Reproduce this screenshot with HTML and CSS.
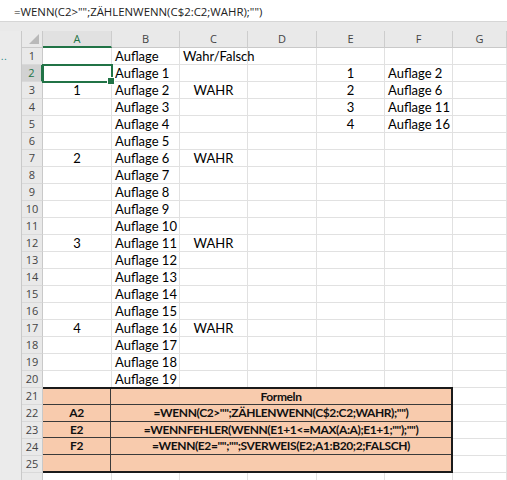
FILE: index.html
```html
<!DOCTYPE html>
<html lang="de">
<head>
<meta charset="utf-8">
<title>Excel</title>
<link rel="stylesheet" href="styles.css">
</head>
<body>
<div class="app">
  <div class="fbar"><span class="ftext">=WENN(C2&gt;"";ZÄHLENWENN(C$2:C2;WAHR);"")</span></div>
  <div class="band"></div>
  <div class="sheetwrap">
    <div class="gutter"><span class="dots">..</span></div>
    <div class="grid">
      <div class="corner"><span class="tri"></span></div>
      <div class="ch sel">A</div><div class="ch">B</div><div class="ch">C</div><div class="ch">D</div><div class="ch">E</div><div class="ch">F</div><div class="ch">G</div>

      <div class="rh">1</div><div class="c"></div><div class="c">Auflage</div><div class="c">Wahr/Falsch</div><div class="c"></div><div class="c"></div><div class="c"></div><div class="c"></div>
      <div class="rh sel">2</div><div class="c active"></div><div class="c">Auflage 1</div><div class="c"></div><div class="c"></div><div class="c ctr">1</div><div class="c">Auflage 2</div><div class="c"></div>
      <div class="rh">3</div><div class="c ctr">1</div><div class="c">Auflage 2</div><div class="c ctr">WAHR</div><div class="c"></div><div class="c ctr">2</div><div class="c">Auflage 6</div><div class="c"></div>
      <div class="rh">4</div><div class="c"></div><div class="c">Auflage 3</div><div class="c"></div><div class="c"></div><div class="c ctr">3</div><div class="c">Auflage 11</div><div class="c"></div>
      <div class="rh">5</div><div class="c"></div><div class="c">Auflage 4</div><div class="c"></div><div class="c"></div><div class="c ctr">4</div><div class="c">Auflage 16</div><div class="c"></div>
      <div class="rh">6</div><div class="c"></div><div class="c">Auflage 5</div><div class="c"></div><div class="c"></div><div class="c"></div><div class="c"></div><div class="c"></div>
      <div class="rh">7</div><div class="c ctr">2</div><div class="c">Auflage 6</div><div class="c ctr">WAHR</div><div class="c"></div><div class="c"></div><div class="c"></div><div class="c"></div>
      <div class="rh">8</div><div class="c"></div><div class="c">Auflage 7</div><div class="c"></div><div class="c"></div><div class="c"></div><div class="c"></div><div class="c"></div>
      <div class="rh">9</div><div class="c"></div><div class="c">Auflage 8</div><div class="c"></div><div class="c"></div><div class="c"></div><div class="c"></div><div class="c"></div>
      <div class="rh">10</div><div class="c"></div><div class="c">Auflage 9</div><div class="c"></div><div class="c"></div><div class="c"></div><div class="c"></div><div class="c"></div>
      <div class="rh">11</div><div class="c"></div><div class="c">Auflage 10</div><div class="c"></div><div class="c"></div><div class="c"></div><div class="c"></div><div class="c"></div>
      <div class="rh">12</div><div class="c ctr">3</div><div class="c">Auflage 11</div><div class="c ctr">WAHR</div><div class="c"></div><div class="c"></div><div class="c"></div><div class="c"></div>
      <div class="rh">13</div><div class="c"></div><div class="c">Auflage 12</div><div class="c"></div><div class="c"></div><div class="c"></div><div class="c"></div><div class="c"></div>
      <div class="rh">14</div><div class="c"></div><div class="c">Auflage 13</div><div class="c"></div><div class="c"></div><div class="c"></div><div class="c"></div><div class="c"></div>
      <div class="rh">15</div><div class="c"></div><div class="c">Auflage 14</div><div class="c"></div><div class="c"></div><div class="c"></div><div class="c"></div><div class="c"></div>
      <div class="rh">16</div><div class="c"></div><div class="c">Auflage 15</div><div class="c"></div><div class="c"></div><div class="c"></div><div class="c"></div><div class="c"></div>
      <div class="rh">17</div><div class="c ctr">4</div><div class="c">Auflage 16</div><div class="c ctr">WAHR</div><div class="c"></div><div class="c"></div><div class="c"></div><div class="c"></div>
      <div class="rh">18</div><div class="c"></div><div class="c">Auflage 17</div><div class="c"></div><div class="c"></div><div class="c"></div><div class="c"></div><div class="c"></div>
      <div class="rh">19</div><div class="c"></div><div class="c">Auflage 18</div><div class="c"></div><div class="c"></div><div class="c"></div><div class="c"></div><div class="c"></div>
      <div class="rh">20</div><div class="c"></div><div class="c">Auflage 19</div><div class="c"></div><div class="c"></div><div class="c"></div><div class="c"></div><div class="c"></div>

      <div class="obox">
        <div class="oa"></div><div class="ob">Formeln</div>
        <div class="oa">A2</div><div class="ob">=WENN(C2&gt;"";ZÄHLENWENN(C$2:C2;WAHR);"")</div>
        <div class="oa">E2</div><div class="ob">=WENNFEHLER(WENN(E1+1&lt;=MAX(A:A);E1+1;"");"")</div>
        <div class="oa">F2</div><div class="ob">=WENN(E2="";"";SVERWEIS(E2;A1:B20;2;FALSCH)</div>
        <div class="oa last"></div><div class="ob last"></div>
      </div>
      <div class="rh">21</div><div class="c"></div>
      <div class="rh">22</div><div class="c"></div>
      <div class="rh">23</div><div class="c"></div>
      <div class="rh">24</div><div class="c"></div>
      <div class="rh">25</div><div class="c"></div>
      <div class="rh"></div><div class="c"></div><div class="c"></div><div class="c"></div><div class="c"></div><div class="c"></div><div class="c"></div><div class="c"></div>
    </div>
  </div>
</div>
</body>
</html>
```
FILE: styles.css
```css
* { box-sizing: border-box; }
html, body { margin: 0; padding: 0; }
body {
  width: 507px;
  height: 480px;
  overflow: hidden;
  background: #ffffff;
  font-family: Lato, "Liberation Sans", sans-serif;
  color: #000;
}
.app {
  display: flex;
  flex-direction: column;
  height: 480px;
  overflow: hidden;
}
.fbar {
  height: 22px;
  background: #fff;
  border-bottom: 1px solid #d6d6d6;
  padding-left: 14px;
  display: flex;
  align-items: center;
}
.ftext {
  font-family: "Open Sans", "Noto Sans", sans-serif;
  font-size: 11.4px;
  color: #222;
  white-space: nowrap;
  padding-top: 1px;
}
.band {
  height: 9px;
  background: #e9e9e9;
}
.sheetwrap {
  display: flex;
  flex: 1;
  min-height: 0;
}
.gutter {
  width: 22px;
  background: #ebebeb;
  border-right: 1px solid #c9c9c9;
  padding-top: 22px;
}
.dots {
  display: block;
  font-size: 10px;
  line-height: 6px;
  color: #2b8a8a;
  letter-spacing: 1px;
  padding-left: 1px;
}
.grid {
  flex: 1;
  display: grid;
  grid-template-columns: 21px 69px 68px 68px 69px 68px 68px 1fr;
  grid-template-rows: 17px;
  grid-auto-rows: 17px;
  font-size: 13px;
}
.corner {
  background: #e9e9e9;
  border-right: 1px solid #c9c9c9;
  border-bottom: 1px solid #c9c9c9;
  position: relative;
}
.tri {
  position: absolute;
  right: 3px;
  bottom: 3px;
  width: 0;
  height: 0;
  border-left: 10px solid transparent;
  border-bottom: 10px solid #b9b9b9;
}
.ch {
  background: #e9e9e9;
  border-right: 1px solid #cdcdcd;
  border-bottom: 1px solid #c9c9c9;
  text-align: center;
  line-height: 16px;
  color: #444;
  font-family: "Open Sans", "Noto Sans", sans-serif;
  font-size: 11px;
}
.ch.sel {
  color: #217346;
  border-bottom: 2px solid #217346;
  background: #e1e1e1;
}
.rh {
  background: #e9e9e9;
  border-right: 1px solid #c9c9c9;
  border-bottom: 1px solid #d9d9d9;
  text-align: center;
  line-height: 16px;
  color: #444;
  font-family: "Open Sans", "Noto Sans", sans-serif;
  font-size: 11px;
}
.rh.sel {
  background: #d2d2d2;
  color: #217346;
  border-right: 2px solid #217346;
}
.c {
  border-right: 1px solid #e1e1e1;
  border-bottom: 1px solid #e1e1e1;
  padding: 0 3px;
  line-height: 16px;
  white-space: nowrap;
}
.ctr { text-align: center; }
.active {
  position: relative;
  outline: 2px solid #217346;
  outline-offset: -1px;
}
.active::after {
  content: "";
  position: absolute;
  right: -4px;
  bottom: -4px;
  width: 6px;
  height: 6px;
  background: #217346;
  border: 1px solid #fff;
}
.obox {
  grid-column: 2 / 8;
  grid-row: 22 / 27;
  margin: -1px 0 0 0;
  border: 2px solid #1a1a1a;
  border-left: none;
  background: #f8cbad;
  display: grid;
  grid-template-columns: 68px 1fr;
  grid-template-rows: repeat(5, 1fr);
  font-weight: 700;
  font-size: 12px;
  letter-spacing: -0.4px;
  color: #111;
}
.oa, .ob {
  border-bottom: 1px solid #3a3a3a;
  text-align: center;
  line-height: 15px;
  white-space: nowrap;
}
.oa { border-right: 1px solid #3a3a3a; }
.oa.last, .ob.last { border-bottom: none; }
```
